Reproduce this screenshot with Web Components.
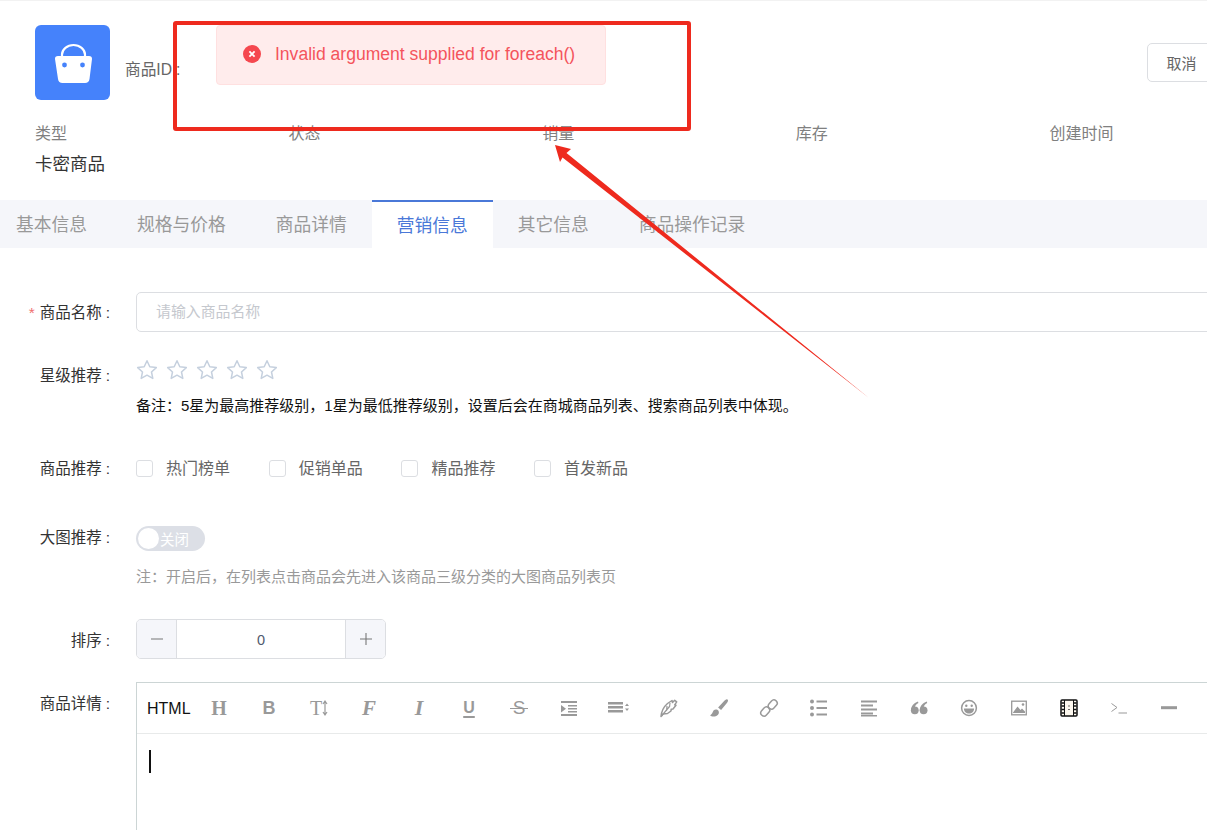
<!DOCTYPE html>
<html lang="zh">
<head>
<meta charset="utf-8">
<title>商品</title>
<style>
  html, body { margin: 0; height: 830px; overflow: hidden; background: #fff; }
  body { font-family: "Liberation Sans", "Noto Sans CJK SC", sans-serif; color: #333; }
</style>
</head>
<body>
<goods-page></goods-page>

<script>
// Shared icons for the editor toolbar, all in a 20x20 box
const toolIcons = {
  indent: '<path d="M2 3h16v2H2zM9 7h9v1.6H9zM9 10h9v1.6H9zM9 13h9v1.6H9zM2 16h16v2H2zM2 7l5 3.7-5 3.7z"/>',
  lineheight: '<path d="M0 4h15v2.4H0zM0 8h15v2.4H0zM0 12h15v2.4H0zM17 8l2-2.6 2 2.6zM17 10.5l2 2.6 2-2.6z"/>',
  pen: '<path d="M2 18.500c.5-5 2.500-9.500 6.500-13L13 2.500l.5 2 2.200-2.200 2 1.500-2 3 1.300.5-3 3.700-1.800.2-.2 1.800-3.500 2.500-4.500.5z" fill="none" stroke="currentColor" stroke-width="1.500" stroke-linejoin="round"/><path d="M2.500 18l8-9.500M8 8l-.5 5M11 5l-.5 4" fill="none" stroke="currentColor" stroke-width="1.200"/>',
  brush: '<path d="M18.500 1.500c1 .8.500 2-.4 3.200l-6 7.300-3-2.400 6.500-7c1-1.200 2-1.800 2.900-1.100zM4.500 12.500c1.500-1.500 4-1.300 5 .3 1 1.800.2 4.200-2.200 5.200-2.400 1-5.200.6-6.300-1 1.800 0 2.500-2.800 3.500-4.500z"/>',
  link: '<g fill="none" stroke="currentColor" stroke-width="1.500"><rect x="10.500" y="1.500" width="6.500" height="10" rx="3.200" transform="rotate(42 13.700 6.500)"/><rect x="3" y="8.500" width="6.500" height="10" rx="3.200" transform="rotate(42 6.200 13.500)"/></g>',
  list: '<circle cx="3" cy="3.500" r="2"/><circle cx="3" cy="10" r="2"/><circle cx="3" cy="16.500" r="2"/><path d="M7.500 2.500H18v2H7.500zM7.500 9H18v2H7.500zM7.500 15.500H18v2H7.500z"/>',
  align: '<path d="M2 2.500h16v2H2zM2 6.500h12v2H2zM2 10.500h16v2H2zM2 14.500h12v2H2zM2 17h16v1.500H2z"/>',
  quote: '<circle cx="5.800" cy="12.300" r="3.900"/><circle cx="14.600" cy="12.300" r="3.900"/><path d="M2 12.500C2 8.500 4.500 5 9 3.500l.4 1.500C7 6.200 5.800 8 5.800 10zM10.800 12.500c0-4 2.500-7.500 7-9l.4 1.500c-2.400 1.200-3.600 3-3.600 5z"/>',
  emoji: '<circle cx="10" cy="10" r="7.400" fill="none" stroke="currentColor" stroke-width="1.500"/><circle cx="7.300" cy="7.700" r="1.200"/><circle cx="12.700" cy="7.700" r="1.200"/><path d="M4.900 10.500h10.200c0 3-2.200 5-5.100 5s-5.100-2-5.100-5z"/>',
  image: '<rect x="2.700" y="3.200" width="14.600" height="13.600" fill="none" stroke="currentColor" stroke-width="1.300"/><path d="M4 14.500l4.500-6 3 3.500 1.500-1.500 3 3v1.500H4z"/><circle cx="14" cy="6.500" r="1.300"/>',
  film: '<rect x="2" y="2" width="16" height="16" rx="1" fill="#fdf8ef" stroke="#111" stroke-width="1.500"/><path d="M5.500 2v16M14.500 2v16" stroke="#111" stroke-width="1"/><path d="M2.500 5h3M2.500 8h3M2.500 11.500h3M2.500 15h3M14.500 5h3M14.500 8h3M14.500 11.500h3M14.500 15h3" stroke="#111" stroke-width="1.300"/><path d="M10 7.500v1M10 11v1" stroke="#111" stroke-width="1.200"/>',
  code: '<path d="M2.500 5.500l5.500 4-5.500 4M9.500 15h8.500" fill="none" stroke="currentColor" stroke-width="1"/>',
  line: '<path d="M2 8.200h16v3H2z"/>'
}

class GoodsPage extends HTMLElement {
  constructor () {
    super()
    this.attachShadow({ mode: 'open' })
    this.shadowRoot.innerHTML = `
    <style>
    :host { display: block; position: relative; width: 1207px; height: 830px; overflow: hidden; border-top: 1px solid #f2f2f2; box-sizing: border-box; }
    .form { display: flex; flex-direction: column; padding-top: 44px; }
    .note { margin-top: 14px; font-size: 15px; line-height: 22px; color: #111; white-space: nowrap; }
    .tip { margin-top: 15px; font-size: 15px; line-height: 22px; color: #999; white-space: nowrap; }
    form-row:nth-child(2) { margin-top: 27px; }
    form-row:nth-child(3) { margin-top: 41px; }
    form-row:nth-child(4) { margin-top: 45px; }
    form-row:nth-child(5) { margin-top: 31px; }
    form-row:nth-child(6) { margin-top: 23px; }
    </style>
    <goods-head></goods-head>
    <tab-bar></tab-bar>
    <div class="form">
      <form-row label="商品名称" required style="--label-top:10px"><text-box placeholder="请输入商品名称"></text-box></form-row>
      <form-row label="星级推荐" style="--label-top:6px">
        <star-rating></star-rating>
        <div class="note">备注：5星为最高推荐级别，1星为最低推荐级别，设置后会在商城商品列表、搜索商品列表中体现。</div>
      </form-row>
      <form-row label="商品推荐"><check-group></check-group></form-row>
      <form-row label="大图推荐" style="--label-top:2px">
        <switch-box></switch-box>
        <div class="tip">注：开启后，在列表点击商品会先进入该商品三级分类的大图商品列表页</div>
      </form-row>
      <form-row label="排序" style="--label-top:11px"><number-box></number-box></form-row>
      <form-row label="商品详情" style="--label-top:11px"><rich-editor></rich-editor></form-row>
    </div>
    <error-toast></error-toast>
    <red-markup></red-markup>
  `
  }
}

class GoodsHead extends HTMLElement {
  constructor () {
    super()
    this.attachShadow({ mode: 'open' })
    this.shadowRoot.innerHTML = `
    <style>
    :host { display: block; padding: 24px 0 0 35px; }
    .top { display: flex; align-items: center; }
    .logo { width: 75px; height: 75px; border-radius: 6px; background: #4582fb; flex: none; }
    .id { margin: 12px 0 0 15px; font-size: 15.7px; color: #666; white-space: nowrap; }
    .id b { position: relative; z-index: 2; margin-left: 4px; font-weight: 400; }
    button { margin-left: auto; margin-right: -9px; width: 69px; height: 39px; padding: 0; flex: none; border: 1px solid #dcdee2; border-radius: 5px; background: #fff; font: inherit; font-size: 15px; color: #666; }
    .stats { display: grid; grid-template-columns: repeat(5, 253.6px); margin-top: 23px; font-size: 16px; line-height: 22px; color: #808080; }
    .value { margin: 7px 0 24px; font-size: 17.5px; line-height: 24px; color: #333; }
    </style>
    <div class="top">
      <svg class="logo" viewBox="0 0 75 75">
        <path d="M27 35v-5.500a11.500 9.500 0 0 1 23 0V35" fill="none" stroke="#fff" stroke-width="2.200"/>
        <path d="M23 31h31c2 0 3.200 1.200 3 3l-2.500 20c-.3 2.400-2 4-4.500 4H27.500c-2.500 0-4.200-1.600-4.500-4L20 34c-.2-1.800 1-3 3-3z" fill="#fff"/>
        <circle cx="29.500" cy="40" r="2.400" fill="#4582fb"/><circle cx="47.500" cy="40" r="2.400" fill="#4582fb"/>
      </svg>
      <span class="id">商品ID<b>:</b></span>
      <button>取消</button>
    </div>
    <div class="stats">
      <span>类型</span><span>状态</span><span>销量</span><span>库存</span><span>创建时间</span>
    </div>
    <div class="value">卡密商品</div>
  `
  }
}

class TabBar extends HTMLElement {
  constructor () {
    super()
    this.attachShadow({ mode: 'open' })
    const names = ['基本信息', '规格与价格', '商品详情', '营销信息', '其它信息', '商品操作记录']
    this.shadowRoot.innerHTML = `
    <style>
    :host { display: flex; height: 48px; background: #f5f6fa; }
    span { padding: 0 25px; font-size: 17.75px; line-height: 50px; color: #999; white-space: nowrap; }
    span:first-of-type { padding-left: 16px; }
    .on { background: #fff; color: #4a78d8; border-top: 2px solid #4a78d8; line-height: 48px; }
    </style>
    ${names.map((n, i) => `<span class="${i === 3 ? 'on' : ''}">${n}</span>`).join('')}
  `
  }
}

class FormRow extends HTMLElement {
  constructor () {
    super()
    this.attachShadow({ mode: 'open' })
    const star = this.hasAttribute('required') ? '<i>*</i>' : ''
    this.shadowRoot.innerHTML = `
    <style>
    :host { display: flex; }
    label { flex: none; box-sizing: border-box; width: 110px; padding-top: var(--label-top, 0); font-size: 15.5px; line-height: 22px; color: #333; text-align: right; white-space: nowrap; }
    i { margin-right: 5px; font-style: normal; color: #f07070; }
    b { margin-left: 4px; font-weight: 400; }
    div { flex: 1; min-width: 0; margin: 0 -30px 0 26px; }
    </style>
    <label>${star}${this.getAttribute('label')}<b>:</b></label>
    <div><slot></slot></div>
  `
  }
}

class TextBox extends HTMLElement {
  constructor () {
    super()
    this.attachShadow({ mode: 'open' })
    this.shadowRoot.innerHTML = `
    <style>
    :host { display: block; box-sizing: border-box; height: 40px; padding: 0 19px; border: 1px solid #dcdee2; border-radius: 5px; font-size: 14.900px; line-height: 39px; color: #c5c8ce; }
    </style>
    ${this.getAttribute('placeholder')}
  `
  }
}

class StarRating extends HTMLElement {
  constructor () {
    super()
    this.attachShadow({ mode: 'open' })
    const one = '<svg viewBox="0 0 22 22"><path d="M11 1.800l2.800 6 6.500.8-4.800 4.400 1.300 6.400-5.800-3.200-5.800 3.200 1.300-6.400L1.700 8.600l6.500-.8z" fill="none" stroke="#c5d0de" stroke-width="1.500" stroke-linejoin="round"/></svg>'
    this.shadowRoot.innerHTML = `
    <style>
    :host { display: flex; gap: 8px; height: 22px; }
    svg { width: 22px; height: 22px; }
    </style>
    ${one.repeat(5)}
  `
  }
}

class CheckGroup extends HTMLElement {
  constructor () {
    super()
    this.attachShadow({ mode: 'open' })
    const names = ['热门榜单', '促销单品', '精品推荐', '首发新品']
    this.shadowRoot.innerHTML = `
    <style>
    :host { display: grid; grid-template-columns: repeat(4, 132.7px); font-size: 16px; line-height: 22px; color: #666; }
    span { display: flex; align-items: center; gap: 13px; white-space: nowrap; }
    b { width: 15px; height: 15px; border: 1px solid #dcdee2; border-radius: 3px; margin-bottom: 2px; }
    </style>
    ${names.map(n => `<span><b></b>${n}</span>`).join('')}
  `
  }
}

class SwitchBox extends HTMLElement {
  constructor () {
    super()
    this.attachShadow({ mode: 'open' })
    this.shadowRoot.innerHTML = `
    <style>
    :host { display: flex; align-items: center; box-sizing: border-box; width: 69px; height: 25px; margin-top: 1px; padding: 0 0 0 2px; border-radius: 13px; background: #dcdfe6; font-size: 14.500px; color: #fff; }
    i { width: 21px; height: 21px; margin-right: 1px; border-radius: 50%; background: #fff; }
    </style>
    <i></i>关闭
  `
  }
}

class NumberBox extends HTMLElement {
  constructor () {
    super()
    this.attachShadow({ mode: 'open' })
    this.shadowRoot.innerHTML = `
    <style>
    :host { display: flex; box-sizing: border-box; width: 250px; height: 40px; border: 1px solid #dcdee2; border-radius: 5px; overflow: hidden; }
    span { flex: none; box-sizing: border-box; display: flex; align-items: center; justify-content: center; width: 40px; background: #f5f6fa; }
    span:first-of-type { border-right: 1px solid #dcdee2; }
    span:last-of-type { border-left: 1px solid #dcdee2; }
    output { flex: 1; font-size: 14.500px; line-height: 40px; color: #515a6e; text-align: center; }
    svg { width: 14px; height: 14px; }
    </style>
    <span><svg viewBox="0 0 14 14"><path d="M1 7h12" stroke="#777" stroke-width="1.100"/></svg></span>
    <output>0</output>
    <span><svg viewBox="0 0 14 14"><path d="M1 7h12M7 1v12" stroke="#777" stroke-width="1.100"/></svg></span>
  `
  }
}

class RichEditor extends HTMLElement {
  constructor () {
    super()
    this.attachShadow({ mode: 'open' })
    const svg = (name, w) => `<svg viewBox="0 0 ${w || 20} 20" style="width:${w || 20}px">${toolIcons[name]}</svg>`
    this.shadowRoot.innerHTML = `
    <style>
    :host { display: block; box-sizing: border-box; height: 300px; border: 1px solid #ccd5d5; }
    .bar { display: flex; align-items: center; height: 50px; border-bottom: 1px solid #e8eaea; color: #999; }
    .html { flex: none; width: 57px; padding: 2px 0 0 10px; box-sizing: border-box; font-size: 16px; color: #111; }
    .t { flex: none; position: relative; display: flex; align-items: center; justify-content: center; width: 50px; height: 24px; }
    .g { font: 700 21px/24px "Liberation Serif", serif; }
    .s { font: 700 18px/24px "Liberation Sans", sans-serif; }
    .strike::after { content: ""; position: absolute; left: 16px; right: 16px; top: 11.500px; height: 1px; background: currentColor; }
    svg { height: 20px; flex: none; fill: currentColor; }
    .caret { width: 2px; height: 23px; margin: 16px 0 0 12px; background: #111; }
    </style>
    <div class="bar">
      <span class="html">HTML</span>
      <span class="t g" style="font-size:20px">H</span>
      <span class="t s" style="font-size:18px">B</span>
      <span class="t g" style="font-weight:400;font-size:20px">T<svg viewBox="0 0 6 20" style="width:6px"><path d="M3 3v14M1 6l2-3 2 3M1 14l2 3 2-3" fill="none" stroke="currentColor" stroke-width="1.200"/></svg></span>
      <span class="t g" style="font-style:italic;font-size:21px">F</span>
      <span class="t g" style="font-style:italic;font-size:22px">I</span>
      <span class="t s" style="font-size:16px;text-decoration:underline;text-underline-offset:3px;text-decoration-thickness:2px">U</span>
      <span class="t s strike" style="font-weight:400;font-size:19px">S</span>
      <span class="t">${svg('indent')}</span>
      <span class="t">${svg('lineheight', 22)}</span>
      <span class="t">${svg('pen')}</span>
      <span class="t">${svg('brush')}</span>
      <span class="t">${svg('link')}</span>
      <span class="t">${svg('list')}</span>
      <span class="t">${svg('align')}</span>
      <span class="t">${svg('quote')}</span>
      <span class="t">${svg('emoji')}</span>
      <span class="t">${svg('image')}</span>
      <span class="t">${svg('film')}</span>
      <span class="t">${svg('code')}</span>
      <span class="t">${svg('line')}</span>
    </div>
    <div class="caret"></div>
  `
  }
}

class ErrorToast extends HTMLElement {
  constructor () {
    super()
    this.attachShadow({ mode: 'open' })
    this.shadowRoot.innerHTML = `
    <style>
    :host { position: absolute; left: 216px; top: 24px; display: flex; align-items: center; gap: 14px; box-sizing: border-box; width: 390px; height: 60px; padding: 0 0 2px 26px; border: 1px solid #ffe0e0; border-radius: 4px; background: #ffecec; font-size: 17.550px; color: #f4545c; white-space: nowrap; }
    svg { width: 18px; height: 18px; flex: none; }
    </style>
    <svg viewBox="0 0 18 18"><circle cx="9" cy="9" r="9" fill="#f5484f"/><path d="M6.400 6.400l5.200 5.200M11.600 6.400l-5.200 5.200" stroke="#fff" stroke-width="1.800"/></svg>
    Invalid argument supplied for foreach()
  `
  }
}

// The red box and arrow someone drew on top of the screenshot
class RedMarkup extends HTMLElement {
  constructor () {
    super()
    this.attachShadow({ mode: 'open' })
    this.shadowRoot.innerHTML = `
    <style>
    :host { position: absolute; left: 0; top: -1px; width: 1207px; height: 830px; pointer-events: none; }
    .box { position: absolute; left: 173px; top: 21px; box-sizing: border-box; width: 518px; height: 110px; border: 4px solid #ee2a1e; border-radius: 3px; }
    svg { position: absolute; left: 0; top: 0; }
    </style>
    <div class="box"></div>
    <svg width="1207" height="830" viewBox="0 0 1207 830">
      <path d="M555 145L571 149 566.500 153 869 398 562.500 157.500 560 162z" fill="#ee2a1e"/>
    </svg>
  `
  }
}

window.customElements.define('goods-head', GoodsHead)
window.customElements.define('tab-bar', TabBar)
window.customElements.define('form-row', FormRow)
window.customElements.define('text-box', TextBox)
window.customElements.define('star-rating', StarRating)
window.customElements.define('check-group', CheckGroup)
window.customElements.define('switch-box', SwitchBox)
window.customElements.define('number-box', NumberBox)
window.customElements.define('rich-editor', RichEditor)
window.customElements.define('error-toast', ErrorToast)
window.customElements.define('red-markup', RedMarkup)
window.customElements.define('goods-page', GoodsPage)
</script>
</body>
</html>
